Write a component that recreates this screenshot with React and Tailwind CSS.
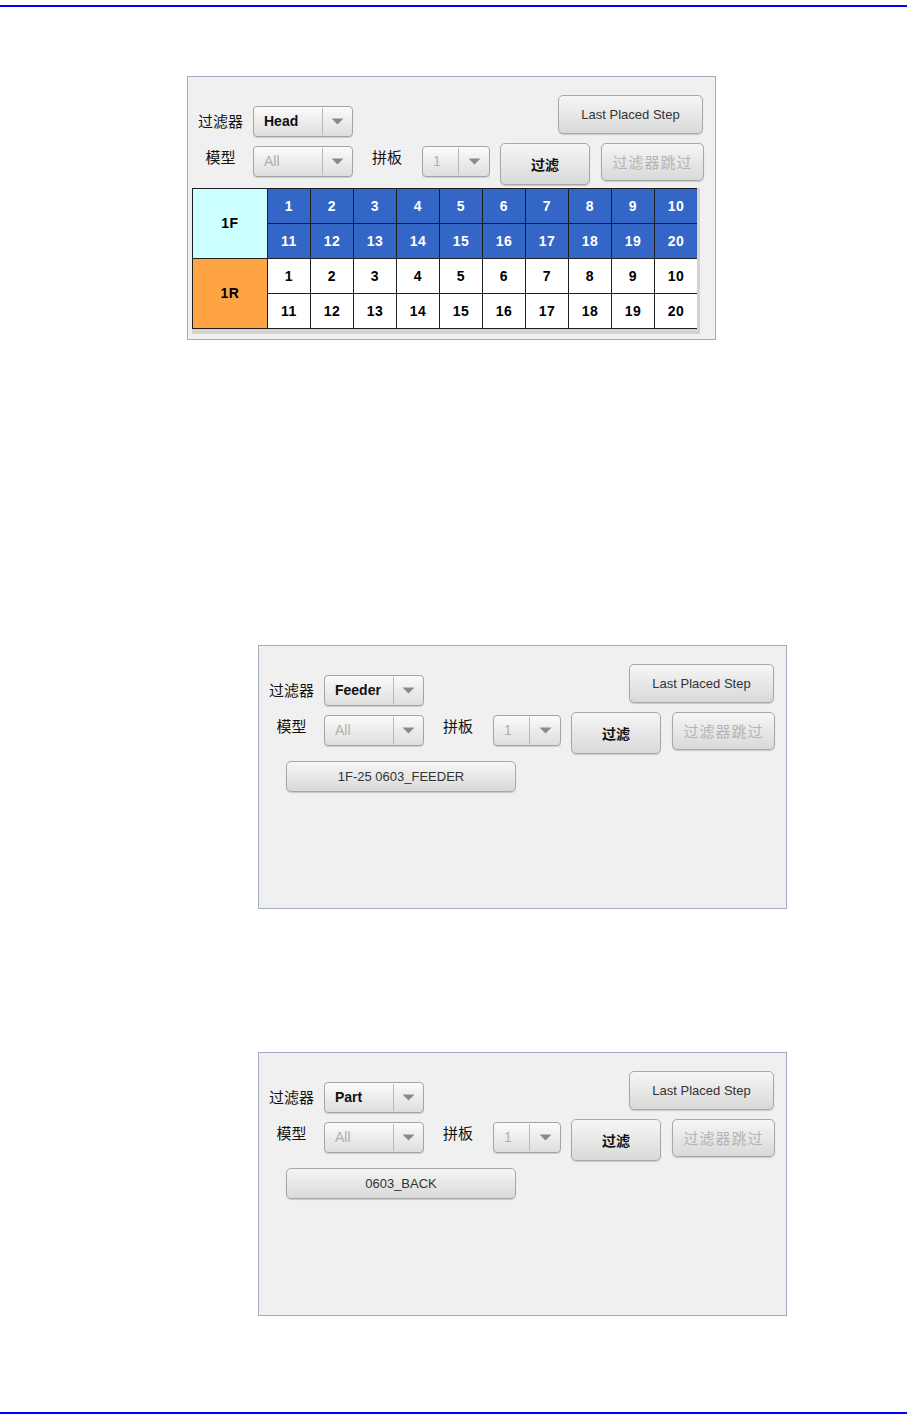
const cjk = { fontFamily: '"Noto Sans CJK SC", "Liberation Sans", sans-serif' };
const latin = { fontFamily: '"Liberation Sans", "Noto Sans CJK SC", sans-serif' };

function Arrow() {
    return (
        <svg width="13" height="7" viewBox="0 0 13 7">
            <path d="M0.5 0.5 H12.5 L6.5 6.5 Z" fill="#8a8a8a" />
        </svg>
    );
}

function Combo({ value, width, textW, disabled, bold }) {
    return (
        <div
            className={`flex h-[31px] rounded-[4px] border border-[#a4a4a4] bg-linear-to-b from-[#fbfbfb] to-[#dedede] shadow-[0_1px_0_#d0d0d0] ${width}`}
        >
            <div
                className={`flex items-center pl-[10px] text-[14px] ${textW} ${bold ? 'font-bold text-[#111]' : ''} ${disabled ? 'text-[#b0b0a8]' : ''}`}
                style={latin}
            >
                {value}
            </div>
            <div className="w-px bg-[#b8b8b8] my-[1px]" />
            <div className="flex flex-1 items-center justify-center">
                <Arrow />
            </div>
        </div>
    );
}

function Btn({ children, className, style }) {
    return (
        <div
            className={`flex items-center justify-center rounded-[5px] border border-[#a8a8a8] bg-linear-to-b from-[#f6f6f6] to-[#d9d9d9] shadow-[0_1px_1px_#c8c8c8] ${className}`}
            style={style}
        >
            {children}
        </div>
    );
}

function Controls({ filter }) {
    return (
        <>
            <div className="flex items-start h-[39px] pr-[12px]">
                <div className="flex items-center mt-[11px]">
                    <div className="w-[65px] text-center text-[15px] text-[#111]" style={cjk}>过滤器</div>
                    <Combo value={filter} width="w-[100px]" textW="w-[68px]" bold />
                </div>
                <Btn className="ml-auto w-[145px] h-[39px] text-[13px] text-[#333]" style={latin}>
                    Last Placed Step
                </Btn>
            </div>
            <div className="flex items-start mt-[9px]">
                <div className="w-[65px] h-[28px] flex items-center justify-center text-[15px] text-[#111]" style={cjk}>模型</div>
                <div className="mt-[3px]">
                    <Combo value="All" width="w-[100px]" textW="w-[68px]" disabled />
                </div>
                <div className="ml-[19px] w-[30px] h-[28px] flex items-center text-[15px] text-[#111] whitespace-nowrap" style={cjk}>拼板</div>
                <div className="ml-[20px] mt-[3px]">
                    <Combo value="1" width="w-[68px]" textW="w-[35px]" disabled />
                </div>
                <Btn className="ml-[10px] w-[90px] h-[42px] text-[14px] font-bold text-[#111]" style={cjk}>
                    过滤
                </Btn>
                <Btn className="ml-[11px] w-[103px] h-[38px] text-[15px] tracking-[1px] text-[#b4b4b4]" style={cjk}>
                    过滤器跳过
                </Btn>
            </div>
        </>
    );
}

function Panel({ className, children }) {
    return (
        <div className={`w-[529px] h-[264px] border border-[#a3acbb] bg-[#f0f0f0] pt-[18px] ${className}`}>
            {children}
        </div>
    );
}

function HeadGrid() {
    const top = [1, 2, 3, 4, 5, 6, 7, 8, 9, 10];
    const bottom = [11, 12, 13, 14, 15, 16, 17, 18, 19, 20];
    const blue = 'bg-[#3366c6] text-white';
    const white = 'bg-white text-black';
    return (
        <div className="ml-[4px] mt-[3px] w-[508px] h-[146px] bg-[#d6d3cc]">
            <div
                className="grid grid-cols-[74px_repeat(10,42px)] grid-rows-[repeat(4,34px)] gap-px w-[505px] border border-[#1e1e1e] bg-[#1e1e1e] text-[14px] tracking-[0.5px] font-bold"
                style={latin}
            >
                <div className="row-span-2 flex items-center justify-center bg-[#ccffff] text-black">1F</div>
                {top.map((n) => (
                    <div key={`a${n}`} className={`flex items-center justify-center ${blue}`}>{n}</div>
                ))}
                {bottom.map((n) => (
                    <div key={`b${n}`} className={`flex items-center justify-center ${blue}`}>{n}</div>
                ))}
                <div className="row-span-2 flex items-center justify-center bg-[#ffa444] text-black">1R</div>
                {top.map((n) => (
                    <div key={`c${n}`} className={`flex items-center justify-center ${white}`}>{n}</div>
                ))}
                {bottom.map((n) => (
                    <div key={`d${n}`} className={`flex items-center justify-center ${white}`}>{n}</div>
                ))}
            </div>
        </div>
    );
}

export default function App() {
    return (
        <div className="w-[907px] h-[1424px] bg-white overflow-hidden flex flex-col">
            <div className="mt-[5px] h-[2px] bg-[#0000ff]" />

            <Panel className="mt-[69px] ml-[187px]">
                <Controls filter="Head" />
                <HeadGrid />
            </Panel>

            <Panel className="mt-[305px] ml-[258px]">
                <Controls filter="Feeder" />
                <Btn className="mt-[7px] ml-[27px] w-[230px] h-[31px] text-[13px] text-[#333]" style={latin}>
                    1F-25 0603_FEEDER
                </Btn>
            </Panel>

            <Panel className="mt-[143px] ml-[258px]">
                <Controls filter="Part" />
                <Btn className="mt-[7px] ml-[27px] w-[230px] h-[31px] text-[13px] text-[#333]" style={latin}>
                    0603_BACK
                </Btn>
            </Panel>

            <div className="mt-[96px] h-[2px] bg-[#0000ff]" />
        </div>
    );
}
